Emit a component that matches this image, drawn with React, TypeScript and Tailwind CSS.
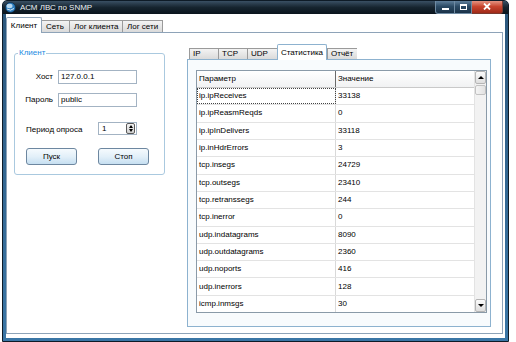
const ROWS: [string, string][] = [
  ["ip.ipReceives", "33138"],
  ["ip.ipReasmReqds", "0"],
  ["ip.ipInDelivers", "33118"],
  ["ip.inHdrErrors", "3"],
  ["tcp.insegs", "24729"],
  ["tcp.outsegs", "23410"],
  ["tcp.retranssegs", "244"],
  ["tcp.inerror", "0"],
  ["udp.indatagrams", "8090"],
  ["udp.outdatagrams", "2360"],
  ["udp.noports", "416"],
  ["udp.inerrors", "128"],
  ["icmp.inmsgs", "30"],
];

const MAIN_TABS = [
  { label: "Клиент", w: "w-[36px]", active: true },
  { label: "Сеть", w: "w-[28px]", active: false },
  { label: "Лог клиента", w: "w-[53px]", active: false },
  { label: "Лог сети", w: "w-[40px]", active: false },
];

const INNER_TABS = [
  { label: "IP", w: "w-[29px]", active: false },
  { label: "TCP", w: "w-[29px]", active: false },
  { label: "UDP", w: "w-[30px]", active: false },
  { label: "Статистика", w: "w-[50px]", active: true },
  { label: "Отчёт", w: "w-[30px]", active: false },
];

function TitleBar() {
  return (
    <div className="h-[13px] flex items-center bg-linear-to-b from-[#3a5064] via-[#16242f] to-[#0a141c]">
      <svg width="11" height="11" viewBox="0 0 11 11" className="ml-[2px]">
        <circle cx="5.5" cy="5.5" r="5" fill="#2f7fc0" stroke="#0c2c48" strokeWidth="0.8" />
        <ellipse cx="4.5" cy="4" rx="3" ry="2.2" fill="#cfe6f7" opacity="0.85" />
        <path d="M2 7 Q5.5 9.5 9 6.5" stroke="#e9f4fb" strokeWidth="0.9" fill="none" />
      </svg>
      <span className="ml-[4px] text-[#eaf0f5] text-[8px]">АСМ ЛВС по SNMP</span>
      <div className="ml-auto mr-[5px] self-start flex h-[14px] -mt-px">
        <div className="flex rounded-bl-[3px] border border-t-0 border-[#6f8ba3] bg-linear-to-b from-[#6a8aa6] via-[#2b4a64] to-[#1a3248]">
          <div className="w-[19px] flex items-end justify-center pb-[3px] border-r border-[#6f8ba3]">
            <div className="w-[7px] h-[2px] bg-white" />
          </div>
          <div className="w-[16px] flex items-center justify-center">
            <div className="w-[7px] h-[6px] border border-white border-t-2" />
          </div>
        </div>
        <div className="w-[31px] flex items-center justify-center rounded-br-[3px] border border-t-0 border-l-0 border-[#7a3a30] bg-linear-to-b from-[#e8a090] via-[#c8452f] to-[#a02a18]">
          <svg width="8" height="7" viewBox="0 0 8 7">
            <path d="M1 0.5 L7 6.5 M7 0.5 L1 6.5" stroke="white" strokeWidth="1.8" />
          </svg>
        </div>
      </div>
    </div>
  );
}

function Spinner() {
  return (
    <div className="w-[39px] h-[13px] border border-[#a3b3c3] bg-white flex items-center">
      <span className="pl-[3px] flex-1">1</span>
      <div className="w-[9px] h-[11px] mr-[1px] border border-[#5a5a5a] rounded-[2px] bg-linear-to-b from-[#f4f4f4] to-[#cfcfcf] flex flex-col items-center justify-center gap-[1px]">
        <div className="w-0 h-0 border-l-[2.5px] border-r-[2.5px] border-b-[3px] border-l-transparent border-r-transparent border-b-black" />
        <div className="w-0 h-0 border-l-[2.5px] border-r-[2.5px] border-t-[3px] border-l-transparent border-r-transparent border-t-black" />
      </div>
    </div>
  );
}

function Button({ label }: { label: string }) {
  return (
    <div className="w-[51px] h-[17px] rounded-[3px] border border-[#6d87a0] bg-linear-to-b from-[#f5fafd] via-[#e3f0f9] to-[#c6dff1] flex items-center justify-center">
      {label}
    </div>
  );
}

function ClientGroup() {
  return (
    <div className="relative ml-[7px] mt-[20px] w-[151px] h-[122px] rounded-[3px] border border-[#aac9df] flex flex-col pt-[16px]">
      <span className="absolute -top-[5px] left-[3px] px-[1px] bg-white text-[#1b8ae2]">Клиент</span>
      <div className="flex items-center h-[14px]">
        <span className="w-[38px] text-right">Хост</span>
        <div className="ml-[5px] w-[79px] h-[14px] border border-[#a3b3c3] bg-white flex items-center pl-[2px]">127.0.0.1</div>
      </div>
      <div className="flex items-center h-[14px] mt-[9px]">
        <span className="w-[38px] text-right">Пароль</span>
        <div className="ml-[5px] w-[79px] h-[14px] border border-[#a3b3c3] bg-white flex items-center pl-[2px]">public</div>
      </div>
      <div className="flex items-center h-[13px] mt-[15px]">
        <span className="ml-[11px] w-[72px] pt-[3px]">Период опроса</span>
        <Spinner />
      </div>
      <div className="flex mt-[13px] ml-[11px] gap-[21px]">
        <Button label="Пуск" />
        <Button label="Стоп" />
      </div>
    </div>
  );
}

function ScrollArrow({ up }: { up: boolean }) {
  return (
    <div className="h-[13px] border border-[#b5b5b5] rounded-[2px] bg-linear-to-b from-[#fbfbfb] to-[#dedede] flex items-center justify-center">
      {up ? (
        <div className="w-0 h-0 border-l-[3px] border-r-[3px] border-b-[3px] border-l-transparent border-r-transparent border-b-black" />
      ) : (
        <div className="w-0 h-0 border-l-[3px] border-r-[3px] border-t-[3px] border-l-transparent border-r-transparent border-t-black" />
      )}
    </div>
  );
}

function StatsGrid() {
  return (
    <div className="w-[291px] h-[243px] border border-[#8a9aa8] bg-white flex">
      <div className="w-[277px] flex flex-col">
        <div className="h-[17px] flex border-b border-[#c9c9c9] bg-linear-to-b from-white to-[#f1f2f3]">
          <div className="w-[139px] border-r border-[#6b6b6b] flex items-center pl-[2px]">Параметр</div>
          <div className="flex-1 flex items-center pl-[2px]">Значение</div>
        </div>
        <div className="flex-1 flex flex-col">
          {ROWS.map(([name, value], i) => (
            <div key={name} className="flex-1 flex border-b border-[#e3e3e3] last:border-b-0">
              <div
                className={
                  i === 0
                    ? "w-[139px] border-r border-[#d9d9d9] flex items-center pl-[2px] outline-1 outline-dotted outline-[#444] -outline-offset-1"
                    : "w-[139px] border-r border-[#d9d9d9] flex items-center pl-[2px]"
                }
              >
                {name}
              </div>
              <div className="flex-1 flex items-center pl-[2px]">{value}</div>
            </div>
          ))}
        </div>
      </div>
      <div className="w-[12px] flex flex-col bg-[#f2f2f2] border-l border-[#e3e3e3]">
        <ScrollArrow up />
        <div className="h-[10px] mt-px border border-[#c2c2c2] rounded-[2px] bg-linear-to-r from-[#f4f4f4] to-[#e2e2e2]" />
        <div className="flex-1" />
        <ScrollArrow up={false} />
      </div>
    </div>
  );
}

export default function App() {
  return (
    <div className="w-[516px] h-[342px] bg-white pl-[2px] font-['Liberation_Sans',Arial,sans-serif] text-[8px] leading-none text-black">
      <div className="w-[507px] h-[342px] flex flex-col bg-linear-to-b from-[#2b577c] to-[#3a76a6] border border-[#0e1b27] rounded-t-[5px] overflow-hidden">
        <TitleBar />
        <div className="flex-1 mx-[3px] mb-[3px] bg-white flex flex-col">
          <div className="h-[18px] flex items-end">
            {MAIN_TABS.map((t) =>
              t.active ? (
                <div key={t.label} className={`${t.w} h-[16px] -mb-px relative z-10 bg-white border border-b-0 border-[#8ea3b8] rounded-t-[2px] flex items-center justify-center`}>
                  {t.label}
                </div>
              ) : (
                <div key={t.label} className={`${t.w} h-[12px] pl-[4px] bg-linear-to-b from-[#f3f3f3] to-[#dadada] border border-b-0 border-l-0 border-[#9a9a9a] flex items-center`}>
                  {t.label}
                </div>
              ),
            )}
          </div>
          <div className="flex-1 mr-[2px] mb-[4px] border border-[#8ea3b8] bg-white flex items-start">
            <ClientGroup />
            <div className="ml-[22px] mt-[11px] flex flex-col">
              <div className="h-[15px] flex items-end pl-[2px]">
                {INNER_TABS.map((t) =>
                  t.active ? (
                    <div key={t.label} className={`${t.w} h-[16px] -mb-px relative z-10 bg-white border border-b-0 border-[#8db2cf] rounded-t-[2px] flex items-center justify-center`}>
                      {t.label}
                    </div>
                  ) : (
                    <div key={t.label} className={`${t.w} h-[11px] pl-[3px] bg-linear-to-b from-[#f3f3f3] to-[#dadada] border border-b-0 border-r-0 border-[#9a9a9a] flex items-center`}>
                      {t.label}
                    </div>
                  ),
                )}
              </div>
              <div className="w-[304px] h-[268px] border border-[#8db2cf] bg-[#f8fbfd] pt-[10px] pl-[8px]">
                <StatsGrid />
              </div>
            </div>
          </div>
        </div>
      </div>
    </div>
  );
}
